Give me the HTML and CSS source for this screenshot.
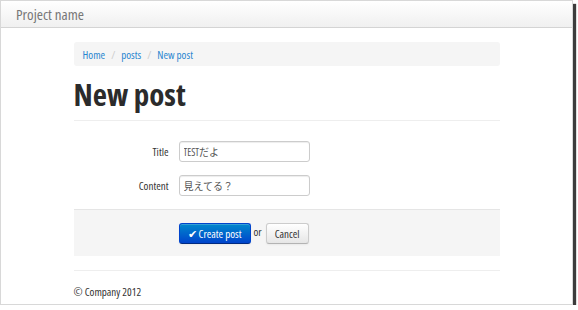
FILE: index.html
```html
<!DOCTYPE html>
<html lang="ja">
<head>
<meta charset="UTF-8">
<title>New post</title>
<link rel="stylesheet" href="styles.css">
</head>
<body>
<div class="window">
  <div class="navbar">
    <a class="brand" href="#">Project name</a>
  </div>
  <div class="container">
    <ul class="breadcrumb">
      <li><a href="#">Home</a><span class="divider">/</span></li>
      <li><a href="#">posts</a><span class="divider">/</span></li>
      <li><a href="#">New post</a></li>
    </ul>
    <div class="page-header">
      <h1>New post</h1>
    </div>
    <form class="form-horizontal">
      <div class="control-group">
        <label class="control-label">Title</label>
        <input class="text-field" type="text" value="TESTだよ">
      </div>
      <div class="control-group">
        <label class="control-label">Content</label>
        <input class="text-field" type="text" value="見えてる？">
      </div>
      <div class="form-actions">
        <button class="btn btn-primary" type="button">&#10004; Create post</button>
        <span class="or">or</span>
        <button class="btn" type="button">Cancel</button>
      </div>
    </form>
    <footer class="footer">
      <p>&copy; Company 2012</p>
    </footer>
  </div>
</div>
</body>
</html>
```

FILE: styles.css
```css
body {
    margin: 0;
    background-color: #fff;
    font-family: "Open Sans", "Noto Sans CJK JP", sans-serif;
    font-stretch: 75%;
    font-size: 11px;
    color: #333;
}

.window {
    width: 571px;
    height: 303px;
    border: 1px solid #d8d8d8;
    box-shadow: 3px 4px 1px #3c3c3c;
    overflow: hidden;
}

.navbar {
    height: 26px;
    background: linear-gradient(#ffffff, #f0f0f0);
    border-bottom: 1px solid #d4d4d4;
    display: flex;
    align-items: center;
    padding-left: 15px;
}

.brand {
    font-size: 15px;
    color: #777;
    text-decoration: none;
}

.container {
    width: 426px;
    margin: 0 auto;
}

.breadcrumb {
    list-style: none;
    margin: 14px 0 0;
    padding: 0 9px;
    height: 24px;
    display: flex;
    align-items: center;
    background-color: #f5f5f5;
    border-radius: 3px;
}

.breadcrumb a {
    color: #2a86d0;
    text-decoration: none;
}

.divider {
    color: #ccc;
    padding: 0 6px;
}

.page-header {
    border-bottom: 1px solid #eee;
    padding-bottom: 8px;
}

.page-header h1 {
    margin: 10px 0 0;
    font-size: 31px;
    line-height: 36px;
    font-weight: bold;
    color: #2b2b2b;
}

.form-horizontal {
    margin-top: 20px;
}

.control-group {
    display: flex;
    align-items: center;
    margin-bottom: 13px;
}

.control-label {
    width: 95px;
    text-align: right;
    padding-right: 10px;
}

.text-field {
    box-sizing: border-box;
    width: 131px;
    height: 21px;
    padding: 2px 4px;
    border: 1px solid #ccc;
    border-radius: 3px;
    font: inherit;
    font-size: 10px;
    color: #555;
    box-shadow: inset 0 1px 1px rgba(0, 0, 0, 0.075);
}

.form-actions {
    margin-top: 1px;
    height: 46px;
    background-color: #f5f5f5;
    border-top: 1px solid #e5e5e5;
    display: flex;
    align-items: center;
    padding-left: 105px;
}

.btn {
    height: 21px;
    padding: 0 8px;
    font: inherit;
    color: #333;
    white-space: nowrap;
    border: 1px solid #ccc;
    border-bottom-color: #b3b3b3;
    border-radius: 3px;
    background: linear-gradient(#ffffff, #e6e6e6);
    box-shadow: inset 0 1px 0 rgba(255, 255, 255, 0.2), 0 1px 2px rgba(0, 0, 0, 0.05);
}

.btn-primary {
    color: #fff;
    padding: 0 8px;
    border-color: #04c #04c #002a80;
    background: linear-gradient(#0088cc, #0044cc);
}

.or {
    margin: 0 4px 0 3px;
    position: relative;
    top: -2px;
}

.footer {
    margin-top: 14px;
    border-top: 1px solid #eee;
}

.footer p {
    margin: 13px 0 0;
}
```
